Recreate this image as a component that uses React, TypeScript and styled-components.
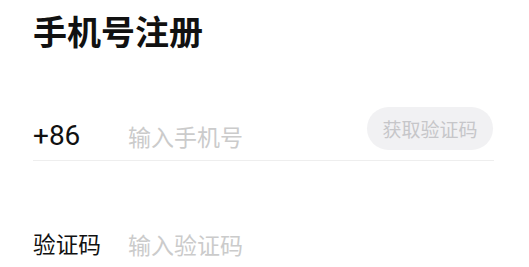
import React from 'react';
import styled, { createGlobalStyle } from 'styled-components';

const GlobalStyle = createGlobalStyle`
  body {
    margin: 0;
    background: #fff;
    font-family: Roboto, "Noto Sans CJK SC", sans-serif;
  }
`;

const Page = styled.div`
  padding: 10px 35px 0 33px;
`;

const Title = styled.h1`
  margin: 0;
  font-family: "Noto Sans CJK SC", sans-serif;
  font-size: 34px;
  font-weight: 700;
  line-height: 41px;
  color: #111;
  letter-spacing: 0;
`;

const Row = styled.div<{ $divider?: boolean; $top: number }>`
  display: flex;
  align-items: flex-end;
  height: 54px;
  margin-top: ${(p) => p.$top}px;
  padding-bottom: 10px;
  box-sizing: border-box;
  border-bottom: 1px solid ${(p) => (p.$divider ? '#eeeeee' : 'transparent')};
`;

const Label = styled.div<{ $cjk?: boolean }>`
  width: 95px;
  flex: none;
  font-family: ${(p) => (p.$cjk ? '"Noto Sans CJK SC", sans-serif' : 'Roboto, sans-serif')};
  font-size: ${(p) => (p.$cjk ? '22.7px' : '28px')};
  line-height: 28px;
  color: #111;
`;

const Input = styled.input`
  flex: 1;
  min-width: 0;
  border: none;
  outline: none;
  padding: 0;
  background: transparent;
  font-family: "Noto Sans CJK SC", sans-serif;
  font-size: 23px;
  line-height: 28px;
  height: 28px;
  color: #111;

  &::placeholder {
    color: #cbcbcb;
  }
`;

const CodeButton = styled.button`
  align-self: flex-start;
  flex: none;
  width: 126px;
  height: 43px;
  border: none;
  border-radius: 22px;
  background: #f1f1f3;
  color: #c6c6c9;
  font-family: "Noto Sans CJK SC", sans-serif;
  font-size: 19px;
  padding: 0;
  margin-right: 1px;
`;

export default function App() {
  return (
    <>
      <GlobalStyle />
      <Page>
        <Title>手机号注册</Title>
        <Row $top={56} $divider>
          <Label>+86</Label>
          <Input placeholder="输入手机号" />
          <CodeButton>获取验证码</CodeButton>
        </Row>
        <Row $top={54}>
          <Label $cjk>验证码</Label>
          <Input placeholder="输入验证码" />
        </Row>
      </Page>
    </>
  );
}
